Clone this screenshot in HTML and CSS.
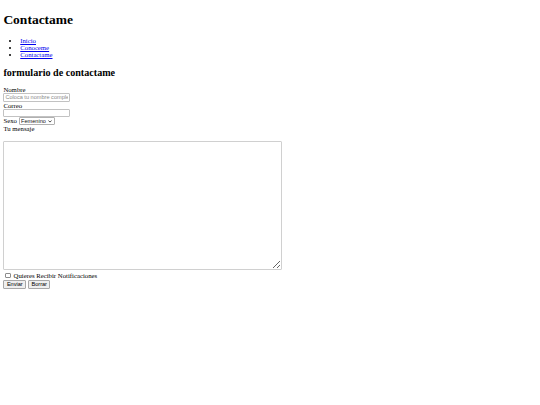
FILE: index.html
```html
<!DOCTYPE html>
<html lang="es">
<head>
<meta charset="utf-8">
<title>Contactame</title>
<link rel="stylesheet" href="styles.css">
</head>
<body>
<h1>Contactame</h1>
<ul class="menu">
<li><a href="#">Inicio</a></li>
<li><a href="#">Conoceme</a></li>
<li><a href="#">Contactame</a></li>
</ul>
<h2>formulario de contactame</h2>
<form>
<label for="nombre">Nombre</label><br>
<input type="text" id="nombre" class="campo" placeholder="Coloca tu nombre completo"><br>
<label for="correo">Correo</label><br>
<input type="email" id="correo" class="campo"><br>
<label for="sexo">Sexo</label>
<span class="selector"><select id="sexo" class="lista"><option>Femenino</option><option>Masculino</option></select><svg class="flecha" viewBox="0 0 10 6" width="4" height="2.6" aria-hidden="true"><path d="M1 1 L5 5 L9 1" fill="none" stroke="#222" stroke-width="2"/></svg></span><br>
<label for="mensaje">Tu mensaje</label><br>
<textarea id="mensaje" class="mensaje"></textarea><br>
<input type="checkbox" id="noti" class="casilla"> <label for="noti">Quieres Recibir Notificaciones</label><br>
<input type="submit" class="boton" value="Enviar"> <input type="reset" class="boton" value="Borrar">
</form>
</body>
</html>
```

FILE: styles.css
```css
body {
  margin: 3.375px;
  font-family: "Liberation Serif", "Times New Roman", serif;
  font-size: 6.75px;
  color: #000;
}
.menu {
  padding-left: 16.875px;
}
.campo {
  box-sizing: border-box;
  width: 67px;
  height: 8.5px;
  padding: 0 1px;
  margin: 0;
  border: 1px solid #c2c2c2;
  border-radius: 1px;
  font-family: "Liberation Sans", Arial, sans-serif;
  font-size: 5.6px;
  vertical-align: baseline;
}
.campo::placeholder {
  color: #8a8a8a;
}
.selector {
  position: relative;
  display: inline-block;
}
.lista {
  appearance: none;
  -webkit-appearance: none;
  box-sizing: border-box;
  width: 36px;
  height: 8px;
  padding: 0 0 0 1.5px;
  margin: 0;
  border: 1px solid #b0b0b0;
  border-radius: 1px;
  font-family: "Liberation Sans", Arial, sans-serif;
  font-size: 5.6px;
  color: #111;
  background: #fff;
}
.flecha {
  position: absolute;
  right: 2.5px;
  top: 3px;
  pointer-events: none;
}
.mensaje {
  box-sizing: border-box;
  width: 279px;
  height: 129px;
  margin: 8.5px 0 0;
  padding: 1px;
  border: 1px solid #d0d0d0;
  border-radius: 1px;
  vertical-align: baseline;
}
.casilla {
  appearance: none;
  -webkit-appearance: none;
  box-sizing: border-box;
  width: 5.5px;
  height: 5.5px;
  margin: 2px 1.3px 0 1.7px;
  border: 1px solid #8c8c8c;
  border-radius: 1px;
  background: #fff;
  vertical-align: -0.5px;
}
.boton {
  box-sizing: border-box;
  height: 9.5px;
  margin: 1px 0 0;
  padding: 0 2.5px;
  border: 1px solid #a8a8a8;
  border-radius: 1px;
  background: #efefef;
  font-family: "Liberation Sans", Arial, sans-serif;
  font-size: 5.6px;
  color: #000;
}
```
